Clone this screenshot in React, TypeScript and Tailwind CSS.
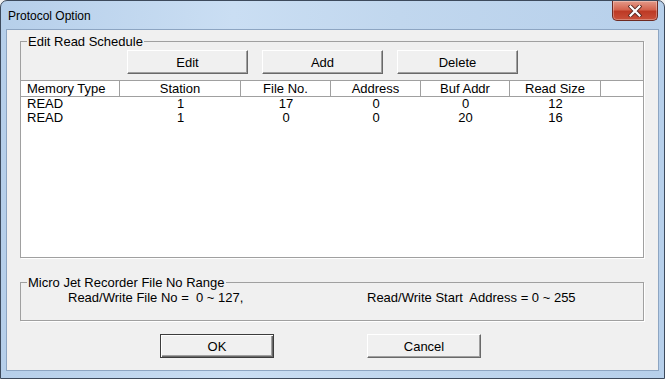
import React from "react";

const rows = [
  { type: "READ", station: "1", file: "17", address: "0", buf: "0", size: "12" },
  { type: "READ", station: "1", file: "0", address: "0", buf: "20", size: "16" },
];

const columns = [
  { title: "Memory Type", width: "w-[99px]", align: "justify-start pl-[6px]" },
  { title: "Station", width: "w-[121px]", align: "justify-center" },
  { title: "File No.", width: "w-[90px]", align: "justify-center" },
  { title: "Address", width: "w-[90px]", align: "justify-center" },
  { title: "Buf Addr", width: "w-[89px]", align: "justify-center" },
  { title: "Read Size", width: "w-[91px]", align: "justify-center" },
];

function Button({ label, isDefault = false }: { label: string; isDefault?: boolean }) {
  if (isDefault) {
    return (
      <button className="w-[114px] h-[24px] bg-[#f0f0f0] border border-[#3c3c3c] shadow-[inset_1px_1px_0_#ffffff,inset_-1px_-1px_0_#696969,inset_-2px_-2px_0_#a0a0a0] text-[13px] leading-[15px] text-black">
        {label}
      </button>
    );
  }
  return (
    <button className="w-[121px] h-[24px] bg-[#f0f0f0] border border-t-white border-l-white border-r-[#696969] border-b-[#696969] shadow-[inset_-1px_-1px_0_#a0a0a0] text-[13px] leading-[15px] text-black">
      {label}
    </button>
  );
}

function CloseButton() {
  return (
    <div className="w-[46px] h-[20px] mr-[1px] rounded-b-[5px] border border-t-0 border-[#6e2a22] bg-[linear-gradient(180deg,#e39a89_0%,#d4644f_45%,#bd3a25_55%,#c9503a_100%)] flex items-center justify-center shadow-[inset_0_0_0_1px_rgba(255,255,255,0.3)]">
      <svg width="14" height="12" viewBox="0 0 14 12">
        <path d="M2.5 1.5 L11.5 10.5 M11.5 1.5 L2.5 10.5" stroke="#5b2a24" strokeWidth="4" strokeLinecap="square" />
        <path d="M2.5 1.5 L11.5 10.5 M11.5 1.5 L2.5 10.5" stroke="#ffffff" strokeWidth="2.2" strokeLinecap="square" />
      </svg>
    </div>
  );
}

export default function App() {
  return (
    <div className="w-[665px] h-[379px] bg-[#f0f0f0] font-['Liberation_Sans',Arial,sans-serif] text-black">
      {/* window frame */}
      <div className="w-[665px] h-[379px] flex flex-col rounded-t-[7px] border border-[#3d4a5c] pl-[5px] pr-[5px] pb-[7px] bg-[linear-gradient(90deg,#b6cfea_0%,#cadef3_35%,#c1d7ee_60%,#b7d0eb_100%)]">
        {/* title bar */}
        <div className="h-[28px] flex items-start justify-between">
          <span className="pl-[2px] pt-[8px] text-[12px] leading-[14px] text-black">Protocol Option</span>
          <CloseButton />
        </div>

        {/* client area */}
        <div className="flex-1 flex flex-col bg-[#f0f0f0] border border-[#8da5c2]">
          {/* Edit Read Schedule group */}
          <fieldset className="ml-[13px] mr-[14px] mt-[4px] border border-[#a0a0a0] shadow-[1px_1px_0_#ffffff] flex flex-col">
            <legend className="ml-[6px] px-[1px] text-[13px] leading-[15px]">Edit Read Schedule</legend>
            <div className="flex gap-[14px] pl-[106px] mt-[1px]">
              <Button label="Edit" />
              <Button label="Add" />
              <Button label="Delete" />
            </div>
            {/* list view */}
            <div className="mt-[6px] -mx-px -mb-px h-[178px] bg-white border border-[#a0a0a0] flex flex-col">
              <div className="h-[16px] flex border-b border-[#a0a0a0] bg-white">
                {columns.map((c) => (
                  <div
                    key={c.title}
                    className={`${c.width} ${c.align} flex items-center border-r border-[#a0a0a0] text-[13px] leading-[15px]`}
                  >
                    {c.title}
                  </div>
                ))}
              </div>
              {rows.map((r, i) => (
                <div key={i} className="h-[14px] flex text-[13px] leading-[14px]">
                  <div className="w-[99px] pl-[6px]">{r.type}</div>
                  <div className="w-[121px] text-center">{r.station}</div>
                  <div className="w-[90px] text-center">{r.file}</div>
                  <div className="w-[90px] text-center">{r.address}</div>
                  <div className="w-[89px] text-center">{r.buf}</div>
                  <div className="w-[91px] text-center">{r.size}</div>
                </div>
              ))}
            </div>
          </fieldset>

          {/* Micro Jet Recorder group */}
          <fieldset className="ml-[13px] mr-[14px] mt-[17px] pb-[15px] border border-[#a0a0a0] shadow-[1px_1px_0_#ffffff]">
            <legend className="ml-[6px] px-[1px] text-[13px] leading-[15px]">Micro Jet Recorder File No Range</legend>
            <div className="flex pl-[47px] text-[13px] leading-[15px] whitespace-pre">
              <span className="w-[299px]">Read/Write File No =  0 ~ 127,</span>
              <span>Read/Write Start  Address = 0 ~ 255</span>
            </div>
          </fieldset>

          {/* dialog buttons */}
          <div className="flex gap-[93px] pl-[153px] mt-[13px]">
            <Button label="OK" isDefault />
            <button className="w-[114px] h-[24px] bg-[#f0f0f0] border border-t-white border-l-white border-r-[#696969] border-b-[#696969] shadow-[inset_-1px_-1px_0_#a0a0a0] text-[13px] leading-[15px] text-black">
              Cancel
            </button>
          </div>
        </div>
      </div>
    </div>
  );
}
